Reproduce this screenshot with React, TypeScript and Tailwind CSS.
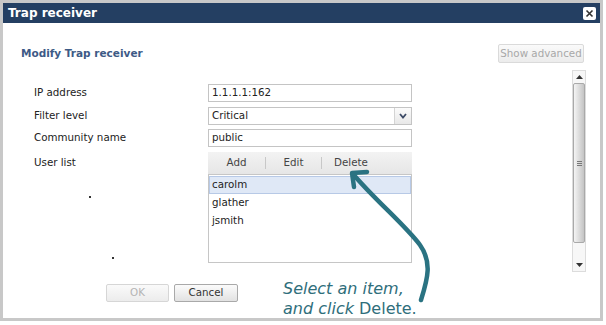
import React from 'react';

const ui = { fontFamily: '"DejaVu Sans", Verdana, sans-serif' };

const Field: React.FC<{ value: string }> = ({ value }) => (
  <div className="h-[18px] w-[204px] border border-[#c4c4c4] bg-white pl-[3px] flex items-center text-[10.3px] text-[#222]">
    {value}
  </div>
);

const Label: React.FC<{ text: string; top?: boolean }> = ({ text, top }) => (
  <div className={`text-[10.3px] text-[#222] ${top ? 'self-start pt-[3px]' : 'self-center'}`}>{text}</div>
);

const Scrollbar = () => (
  <div className="w-[14px] h-[202px] border border-[#dcdcdc] bg-[#f7f7f7] flex flex-col items-center">
    <div className="h-[12px] flex items-center justify-center">
      <svg width="7" height="4" viewBox="0 0 7 4"><path d="M0 4 L3.5 0 L7 4 Z" fill="#333" /></svg>
    </div>
    <div className="w-[12px] h-[160px] rounded-[2px] border border-[#a9a9a9] bg-gradient-to-r from-[#f4f4f4] via-[#dcdcdc] to-[#c4c4c4] flex flex-col items-center justify-center gap-[1px]">
      <div className="w-[5px] h-px bg-[#777]" />
      <div className="w-[5px] h-px bg-[#777]" />
      <div className="w-[5px] h-px bg-[#777]" />
    </div>
    <div className="flex-1" />
    <div className="h-[12px] flex items-center justify-center">
      <svg width="7" height="4" viewBox="0 0 7 4"><path d="M0 0 L3.5 4 L7 0 Z" fill="#333" /></svg>
    </div>
  </div>
);

export default function App() {
  return (
    <div className="w-[606px] h-[325px] bg-white relative overflow-hidden" style={ui}>
      <div className="w-[603px] h-[321px] border-[3px] border-[#c8c8c8] flex flex-col bg-white">
        {/* Title bar */}
        <div className="h-[20px] bg-[#243f62] flex items-center justify-between pl-[5px] pr-[4px]">
          <span className="text-white font-bold text-[12px]">Trap receiver</span>
          <button className="w-[13px] h-[13px] bg-white rounded-[2px] flex items-center justify-center">
            <svg width="9" height="9" viewBox="0 0 9 9">
              <path d="M1.5 1.5 L7.5 7.5 M7.5 1.5 L1.5 7.5" stroke="#333" strokeWidth="1.6" />
            </svg>
          </button>
        </div>

        {/* Body */}
        <div className="flex-1 flex flex-col pt-[21px]">
          <div className="h-[19px] flex items-center justify-between pl-[18px] pr-[16px]">
            <span className="font-bold text-[10.5px] text-[#3d5a86]">Modify Trap receiver</span>
            <button className="h-[19px] w-[86px] border border-[#dadada] rounded-[2px] bg-gradient-to-b from-[#fafafa] to-[#ececec] text-[10.3px] text-[#a8a8a8] whitespace-nowrap px-0">
              Show advanced
            </button>
          </div>

          <div className="flex mt-[7px] pr-[14px]">
            <div className="flex-1 pl-[31px] pt-[14px] flex flex-col">
              <div className="grid grid-cols-[174px_204px] gap-y-[4.5px]">
                <Label text="IP address" />
                <Field value="1.1.1.1:162" />
                <Label text="Filter level" />
                <div className="h-[18px] w-[204px] border border-[#c4c4c4] bg-white flex text-[10.3px] text-[#222]">
                  <div className="flex-1 pl-[3px] flex items-center">Critical</div>
                  <div className="w-[17px] border-l border-[#d4d4d4] bg-gradient-to-b from-[#fbfbfb] to-[#e8e8e8] flex items-center justify-center">
                    <svg width="8" height="6" viewBox="0 0 8 6"><path d="M1 1 L4 4.5 L7 1" stroke="#3c4a66" strokeWidth="1.8" fill="none" /></svg>
                  </div>
                </div>
                <Label text="Community name" />
                <Field value="public" />
                <Label text="User list" top />
                <div className="w-[204px] flex flex-col">
                  <div className="h-[22px] bg-gradient-to-b from-[#f3f3f3] to-[#e6e6e6] flex items-center text-[10.3px] text-[#444]">
                    <span className="w-[57px] text-center">Add</span>
                    <span className="w-px h-[12px] bg-[#c8c8c8]" />
                    <span className="w-[55px] text-center">Edit</span>
                    <span className="w-px h-[12px] bg-[#c8c8c8]" />
                    <span className="w-[58px] text-center">Delete</span>
                  </div>
                  <div className="h-[89px] border border-[#c6c6c6] bg-white pt-px text-[10.3px] text-[#222] flex flex-col">
                    <div className="h-[18px] border border-[#b7c9e6] bg-[#dfe8f6] pl-[2px] flex items-center">carolm</div>
                    <div className="h-[18px] pl-[3px] flex items-center">glather</div>
                    <div className="h-[18px] pl-[3px] flex items-center">jsmith</div>
                  </div>
                </div>
              </div>

              <div className="flex gap-[5px] mt-[21px] ml-[72px]">
                <button className="w-[63px] h-[18px] border border-[#d6d6d6] rounded-[2px] bg-gradient-to-b from-[#fafafa] to-[#ececec] text-[10.3px] text-[#b4b4b4]">
                  OK
                </button>
                <button className="w-[64px] h-[18px] border border-[#a9a9a9] rounded-[2px] bg-gradient-to-b from-[#fbfbfb] to-[#e2e2e2] text-[10.3px] text-[#333]">
                  Cancel
                </button>
              </div>
            </div>
            <Scrollbar />
          </div>
        </div>
      </div>

      {/* stray dots */}
      <span className="absolute left-[89px] top-[196px] w-[2px] h-[2px] bg-[#333]" />
      <span className="absolute left-[112px] top-[257px] w-[2px] h-[2px] bg-[#333]" />

      {/* annotation arrow */}
      <svg className="absolute left-0 top-0 pointer-events-none" width="606" height="325" viewBox="0 0 606 325">
        <path
          d="M353 174 C 375 200, 405 225, 420 245 C 432 262, 428 278, 421 300"
          stroke="#2a7382"
          strokeWidth="4.5"
          strokeLinecap="round"
          fill="none"
        />
        <path d="M367 172 L352 173 L354 187" stroke="#2a7382" strokeWidth="4.5" strokeLinecap="round" strokeLinejoin="round" fill="none" />
      </svg>

      {/* annotation text */}
      <div className="absolute left-[283px] top-[279px] text-[#2f6e7b] leading-[20px] text-[16px]">
        <div className="italic">Select an item,</div>
        <div>
          <span className="italic">and click </span>
          <span>Delete.</span>
        </div>
      </div>
    </div>
  );
}
